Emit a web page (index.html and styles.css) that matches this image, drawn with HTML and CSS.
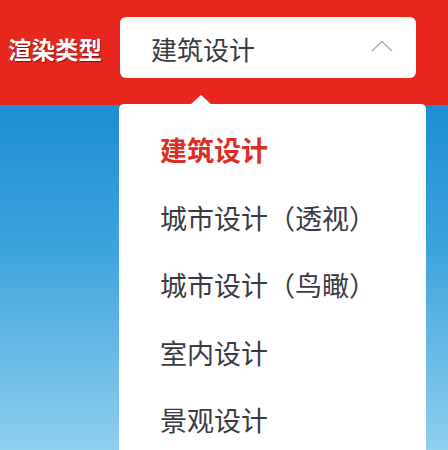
FILE: index.html
```html
<!DOCTYPE html>
<html lang="zh">
<head>
<meta charset="utf-8">
<link rel="stylesheet" href="styles.css">
</head>
<body>
<div class="page">
  <header class="bar">
    <span class="label">渲染类型</span>
    <div class="select">
      <span class="value">建筑设计</span>
      <svg class="chev" width="22" height="12" viewBox="0 0 22 12"><path d="M1 11 L11 1.5 L21 11" fill="none" stroke="#b0b0b4" stroke-width="1.6"/></svg>
    </div>
  </header>
  <main class="stage">
    <div class="menu">
      <span class="caret"></span>
      <ul class="list">
        <li class="item active">建筑设计</li>
        <li class="item">城市设计（透视）</li>
        <li class="item">城市设计（鸟瞰）</li>
        <li class="item">室内设计</li>
        <li class="item">景观设计</li>
      </ul>
    </div>
  </main>
</div>
</body>
</html>
```
FILE: styles.css
```css
html, body {
  margin: 0;
  padding: 0;
  width: 448px;
  height: 450px;
  overflow: hidden;
}
body {
  font-family: "Noto Sans CJK SC", "Noto Sans", sans-serif;
}
.page {
  position: relative;
  width: 448px;
  height: 450px;
}
.bar {
  height: 105px;
  background: #e8281f;
  display: flex;
  align-items: flex-start;
  padding-left: 8px;
  box-sizing: border-box;
}
.label {
  width: 96px;
  margin-top: 33px;
  font-size: 23.5px;
  line-height: 32px;
  font-weight: 700;
  color: #fff;
  text-shadow: 1px 1px 1px rgba(110, 0, 0, 0.7), -0.5px 0 0 rgba(110,0,0,0.4);
}
.select {
  margin-left: 16px;
  margin-top: 17px;
  width: 296px;
  height: 61px;
  background: #fff;
  border-radius: 6px;
  display: flex;
  align-items: center;
  justify-content: space-between;
  padding: 0 23px 0 31px;
  box-sizing: border-box;
}
.value {
  font-size: 26px;
  color: #3a3a42;
  line-height: 30px;
  margin-top: 2px;
}
.chev {
  display: block;
  margin-top: -4px;
}
.stage {
  height: 345px;
  background: linear-gradient(180deg, #1c8ed4 0%, #3ba3dc 40%, #6cbce6 75%, #90cfee 100%);
}
.menu {
  position: absolute;
  left: 119px;
  top: 104px;
  width: 307px;
  height: 360px;
  background: #fff;
  border-radius: 5px;
}
.caret {
  position: absolute;
  left: 71px;
  top: -9px;
  width: 0;
  height: 0;
  border-left: 11px solid transparent;
  border-right: 11px solid transparent;
  border-bottom: 10px solid #fff;
}
.list {
  list-style: none;
  margin: 0;
  padding: 12px 0 0 41px;
}
.item {
  height: 67.5px;
  display: flex;
  align-items: center;
  font-size: 27px;
  color: #3a3a42;
}
.item.active {
  color: #dc2d26;
  font-weight: 700;
}
```
